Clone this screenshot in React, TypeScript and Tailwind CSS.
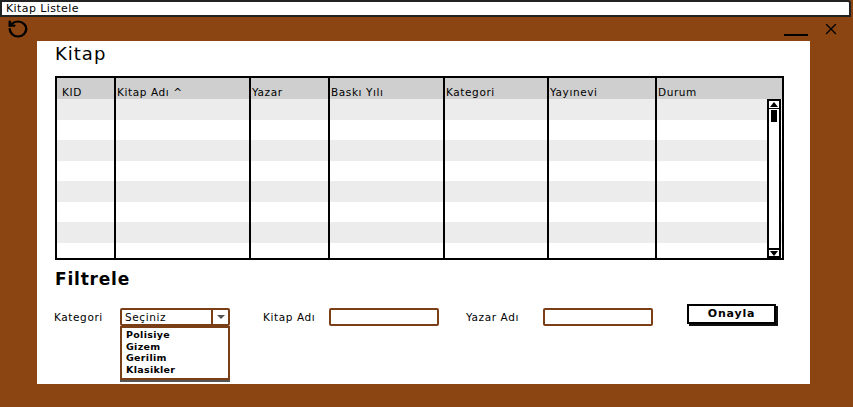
import React from 'react';
import { RotateCcw, X } from 'lucide-react';

const columns = [
  { label: 'KID', width: 'w-[59px]', pad: 'pl-[5px]' },
  { label: 'Kitap Adı ^', width: 'w-[135px]', pad: 'pl-[1px]' },
  { label: 'Yazar', width: 'w-[79px]', pad: 'pl-[1px]' },
  { label: 'Baskı Yılı', width: 'w-[115px]', pad: 'pl-[1px]' },
  { label: 'Kategori', width: 'w-[104px]', pad: 'pl-[1px]' },
  { label: 'Yayınevi', width: 'w-[108px]', pad: 'pl-[1px]' },
  { label: 'Durum', width: 'flex-1', pad: 'pl-[1px]' },
];

const rows = [0, 1, 2, 3, 4, 5, 6, 7];
const categories = ['Polisiye', 'Gizem', 'Gerilim', 'Klasikler'];

export default function App() {
  return (
    <div className="w-[853px] h-[407px] bg-[#8B4513] flex flex-col overflow-hidden font-['DejaVu_Sans','Noto_Sans',sans-serif] text-black">
      {/* Title bar */}
      <div className="h-[17px] w-[851px] bg-white border-2 border-[#222] rounded-tr-[3px] flex items-center pl-[4px] text-[11px] tracking-[0.4px] leading-none">
        Kitap Listele
      </div>

      {/* Window controls */}
      <div className="h-[24px] flex items-start relative">
        <RotateCcw size={20} strokeWidth={2.6} className="ml-[8px] mt-[2px] scale-x-110" />
        <div className="flex-1" />
        <div className="w-[24px] h-[2px] bg-black mt-[17px] mr-[14px]" />
        <X size={18} strokeWidth={1.8} className="mt-[3px] mr-[13px]" />
      </div>

      {/* Main panel */}
      <div className="ml-[37px] w-[773px] h-[343px] bg-white pt-[2px] pl-[18px] flex flex-col">
        <div className="h-[22px] leading-[22px] text-[18px] tracking-[1px]">Kitap</div>

        {/* Table */}
        <div className="mt-[11px] w-[729px] h-[184px] border-2 border-black flex relative overflow-hidden">
          {columns.map((c, i) => (
            <div
              key={c.label}
              className={`${c.width} flex flex-col ${i < columns.length - 1 ? 'border-r-2 border-black' : ''}`}
            >
              <div className={`h-[21px] shrink-0 bg-[#cfcfcf] flex items-end pb-[2px] ${c.pad} text-[10.5px] tracking-[0.6px] leading-none`}>
                {c.label}
              </div>
              {rows.map((r) => (
                <div key={r} className={`h-[20.5px] shrink-0 ${r % 2 === 0 ? 'bg-[#ececec]' : 'bg-white'}`} />
              ))}
            </div>
          ))}

          {/* Scrollbar */}
          <div className="absolute right-[1px] top-[21px] bottom-0 w-[14px] border-2 border-black bg-white flex flex-col">
            <div className="h-[8px] border-b border-black flex items-center justify-center">
              <div className="w-0 h-0 border-l-[4px] border-r-[4px] border-b-[5px] border-l-transparent border-r-transparent border-b-black" />
            </div>
            <div className="h-[12px] mx-[2px] mt-[1px] bg-black" />
            <div className="flex-1" />
            <div className="h-[8px] border-t-2 border-black flex items-center justify-center">
              <div className="w-0 h-0 border-l-[4px] border-r-[4px] border-t-[5px] border-l-transparent border-r-transparent border-t-black" />
            </div>
          </div>
        </div>

        <div className="mt-[8px] h-[22px] leading-[22px] text-[17px] tracking-[0.8px] font-bold">Filtrele</div>

        {/* Filter row */}
        <div className="mt-[14px] flex items-start -ml-[1px]">
          <div className="w-[66px] mt-[6px] text-[10.5px] tracking-[0.6px] leading-[14px]">Kategori</div>
          <div className="relative w-[110px] mt-[4px]">
            <div className="h-[18px] border-2 border-[#7a3f16] rounded-[2px] flex items-stretch">
              <div className="flex-1 pl-[3px] text-[10.5px] tracking-[0.6px] leading-[14px]">Seçiniz</div>
              <div className="w-[17px] border-l-2 border-[#7a3f16] flex items-center justify-center">
                <div className="w-0 h-0 border-l-[4px] border-r-[4px] border-t-[4px] border-l-transparent border-r-transparent border-t-[#555]" />
              </div>
            </div>
            <div className="absolute left-0 top-[18px] w-[110px] h-[54px] border-2 border-[#7a3f16] bg-white pl-[4px] pt-[1px] shadow-[0_2px_0_#555]">
              {categories.map((c) => (
                <div key={c} className="text-[9.5px] tracking-[0.3px] leading-[11.5px] font-semibold">{c}</div>
              ))}
            </div>
          </div>

          <div className="ml-[33px] w-[66px] mt-[6px] text-[10.5px] tracking-[0.6px] leading-[14px]">Kitap Adı</div>
          <div className="w-[110px] h-[18px] mt-[4px] border-2 border-[#7a3f16] rounded-[2px]" />

          <div className="ml-[27px] w-[77px] mt-[6px] text-[10.5px] tracking-[0.6px] leading-[14px]">Yazar Adı</div>
          <div className="w-[110px] h-[18px] mt-[4px] border-2 border-[#7a3f16] rounded-[2px]" />

          <div className="ml-[34px] w-[89px] h-[20px] border-2 border-black bg-white shadow-[2px_2px_0_#111] flex items-center justify-center text-[11px] tracking-[0.8px] font-bold">
            Onayla
          </div>
        </div>
      </div>
    </div>
  );
}
